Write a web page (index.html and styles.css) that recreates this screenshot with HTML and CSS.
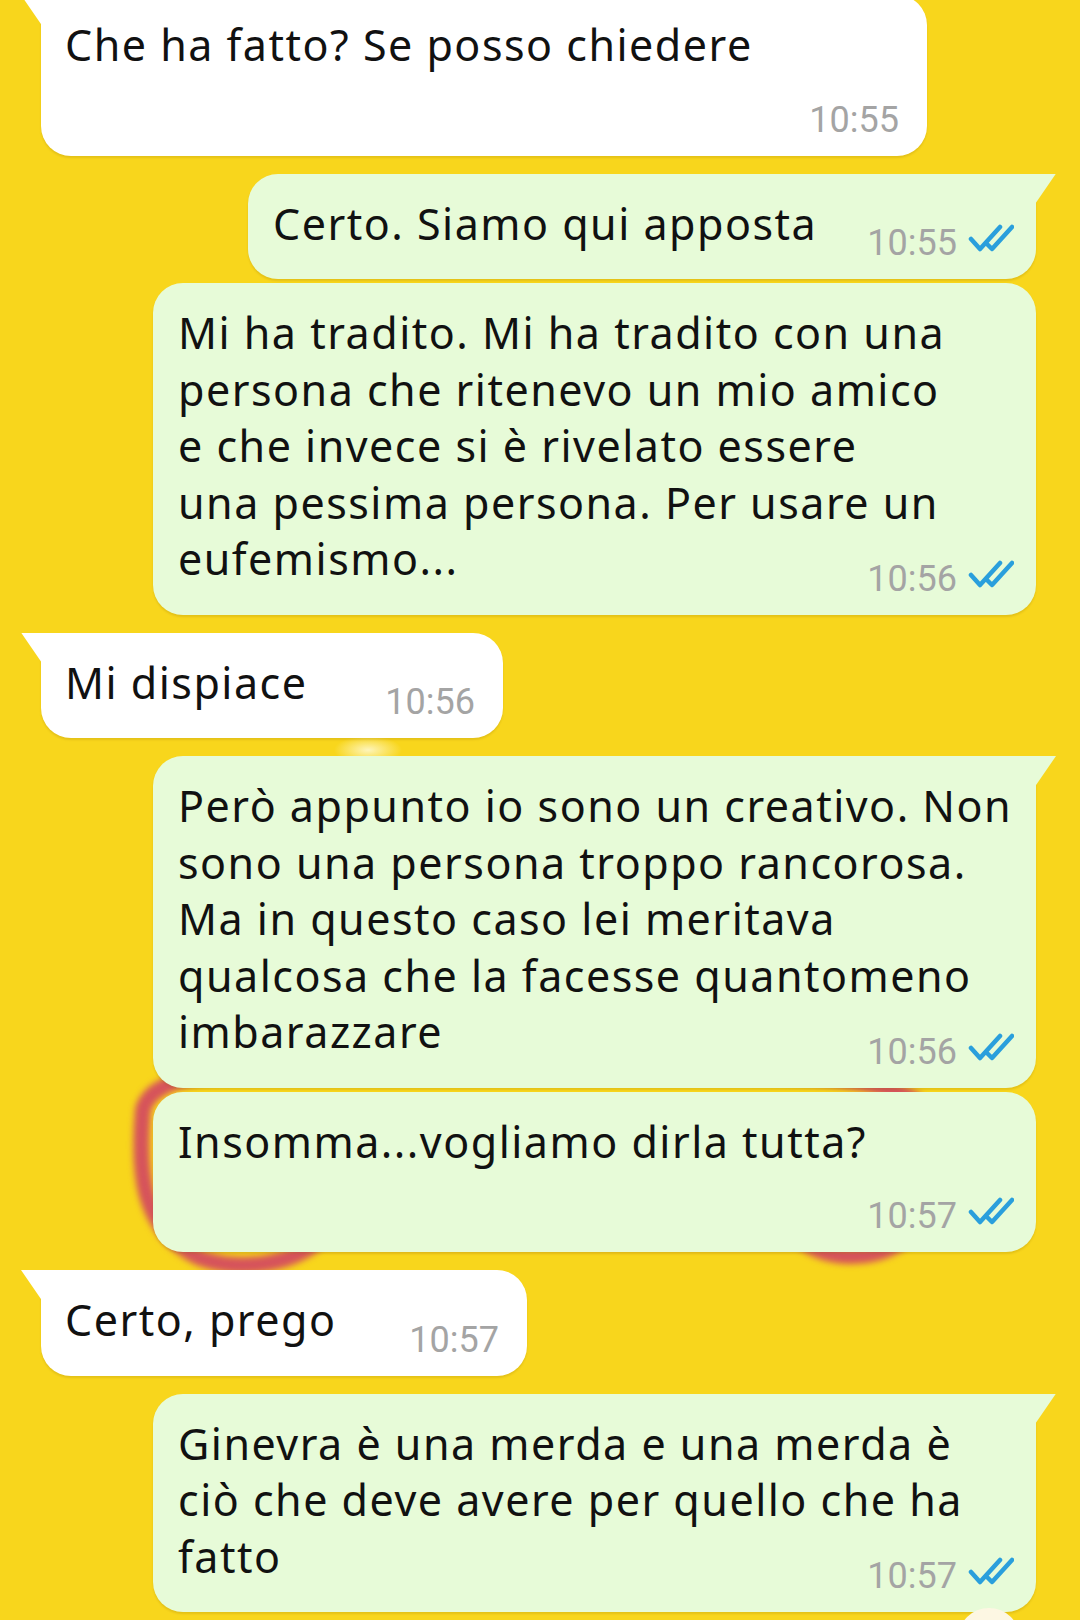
FILE: index.html
```html
<!DOCTYPE html>
<html>
<head>
    <title>Chat</title>
    <link rel="stylesheet" href="styles.css">
</head>
<body>
    <div class="screen">
        <!-- wallpaper shape behind the bubbles -->
        <svg class="wallpaper" viewBox="0 0 1080 1620" width="1080" height="1620">
            <path d="M143 1110 C138 1170 140 1230 200 1258 C240 1272 290 1265 320 1240 L800 1240 C830 1262 880 1262 910 1235 C935 1200 935 1130 915 1100 C880 1080 820 1075 700 1070 L300 1070 C200 1070 150 1080 143 1110 Z"
                  fill="none" stroke="#d6535b" stroke-width="16"/>
        </svg>

        <div class="chat">
            <div class="row in tail">
                <div class="bubble w-886">
                    <p class="text">Che ha fatto? Se posso chiedere</p>
                    <div class="meta below"><span class="time">10:55</span></div>
                </div>
            </div>

            <div class="row out tail">
                <div class="bubble w-788">
                    <p class="text">Certo. Siamo qui apposta</p>
                    <div class="meta"><span class="time">10:55</span><svg class="ticks" viewBox="0 0 46 28"><path d="M3 15 L12 25 L32 3 M20 21 L24 25 L44 3"/></svg></div>
                </div>
            </div>
            <div class="row out cont">
                <div class="bubble w-883">
                    <p class="text">Mi ha tradito. Mi ha tradito con una<br>persona che ritenevo un mio amico<br>e che invece si è rivelato essere<br>una pessima persona. Per usare un<br>eufemismo...</p>
                    <div class="meta"><span class="time">10:56</span><svg class="ticks" viewBox="0 0 46 28"><path d="M3 15 L12 25 L32 3 M20 21 L24 25 L44 3"/></svg></div>
                </div>
            </div>

            <div class="row in tail">
                <div class="bubble w-462">
                    <p class="text">Mi dispiace</p>
                    <div class="meta"><span class="time">10:56</span></div>
                </div>
            </div>

            <div class="row out tail">
                <div class="bubble w-883">
                    <p class="text">Però appunto io sono un creativo. Non<br>sono una persona troppo rancorosa.<br>Ma in questo caso lei meritava<br>qualcosa che la facesse quantomeno<br>imbarazzare</p>
                    <div class="meta"><span class="time">10:56</span><svg class="ticks" viewBox="0 0 46 28"><path d="M3 15 L12 25 L32 3 M20 21 L24 25 L44 3"/></svg></div>
                </div>
            </div>
            <div class="row out cont">
                <div class="bubble w-883">
                    <p class="text">Insomma...vogliamo dirla tutta?</p>
                    <div class="meta below"><span class="time">10:57</span><svg class="ticks" viewBox="0 0 46 28"><path d="M3 15 L12 25 L32 3 M20 21 L24 25 L44 3"/></svg></div>
                </div>
            </div>

            <div class="row in tail">
                <div class="bubble w-486">
                    <p class="text">Certo, prego</p>
                    <div class="meta"><span class="time">10:57</span></div>
                </div>
            </div>

            <div class="row out tail">
                <div class="bubble w-883">
                    <p class="text">Ginevra è una merda e una merda è<br>ciò che deve avere per quello che ha<br>fatto</p>
                    <div class="meta"><span class="time">10:57</span><svg class="ticks" viewBox="0 0 46 28"><path d="M3 15 L12 25 L32 3 M20 21 L24 25 L44 3"/></svg></div>
                </div>
            </div>
        </div>

        <div class="fab"></div>
    </div>
</body>
</html>
```

FILE: styles.css
```css
* {
    box-sizing: border-box;
}
body {
    margin: 0;
    font-family: "Noto Sans", "Open Sans", sans-serif;
}
.screen {
    position: relative;
    width: 1080px;
    height: 1620px;
    overflow: hidden;
    background:
        radial-gradient(ellipse 34px 14px at 368px 750px, rgba(255,250,215,0.85), rgba(255,250,215,0)),
        #f8d61c;
}
.wallpaper {
    position: absolute;
    left: 0;
    top: 0;
    filter: blur(3px);
}
.chat {
    position: relative;
    display: flex;
    flex-direction: column;
    margin-top: -5px;
}
.row {
    display: flex;
    margin-top: 18px;
}
.row:first-child {
    margin-top: 0;
}
.row.cont {
    margin-top: 4px;
}
.row.in {
    justify-content: flex-start;
    padding-left: 41px;
}
.row.out {
    justify-content: flex-end;
    padding-right: 44px;
}
.bubble {
    position: relative;
    border-radius: 30px;
    padding: 22px 28px 18px 24px;
    box-shadow: 0 2px 2px rgba(140,100,0,0.18);
}
.in .bubble {
    background: #ffffff;
}
.out .bubble {
    background: #e7fbd8;
    padding-left: 25px;
    padding-right: 22px;
}
.tail.in .bubble {
    border-top-left-radius: 0;
}
.tail.out .bubble {
    border-top-right-radius: 0;
}
.tail .bubble::before {
    content: "";
    position: absolute;
    top: 0;
    width: 22px;
    height: 32px;
    background: inherit;
}
.tail.in .bubble::before {
    left: -20px;
    clip-path: polygon(0 0, 100% 0, 100% 100%);
}
.tail.out .bubble::before {
    right: -20px;
    clip-path: polygon(0 0, 100% 0, 0 100%);
}
.w-886 { width: 886px; }
.w-462 { width: 462px; }
.w-486 { width: 486px; }
.w-883 { width: 883px; }
.w-788 { width: 788px; }
.text {
    margin: 0;
    font-size: 43px;
    line-height: 56.5px;
    letter-spacing: 1.5px;
    color: #111;
    white-space: nowrap;
}
.meta {
    display: flex;
    justify-content: flex-end;
    align-items: flex-end;
    height: 36px;
    margin-top: -27px;
}
.meta.below {
    margin-top: 28px;
}
.time {
    font-family: Roboto, sans-serif;
    font-size: 36px;
    line-height: 36px;
    color: #a4a4a4;
}
.ticks {
    width: 46px;
    height: 28px;
    margin-left: 11px;
    margin-bottom: 9px;
    fill: none;
    stroke: #2a9fdc;
    stroke-width: 4.5;
    stroke-linecap: round;
    stroke-linejoin: round;
}
.fab {
    position: absolute;
    left: 958px;
    top: 1608px;
    width: 62px;
    height: 62px;
    border-radius: 50%;
    background: #fdf7e3;
}
```
